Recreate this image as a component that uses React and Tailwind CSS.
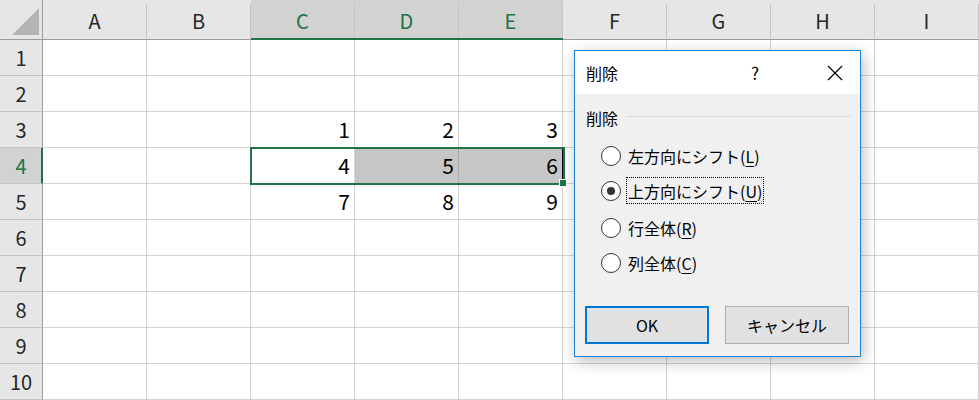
const cols = ['A', 'B', 'C', 'D', 'E', 'F', 'G', 'H', 'I'];
const values = {
  3: { C: '1', D: '2', E: '3' },
  4: { C: '4', D: '5', E: '6' },
  5: { C: '7', D: '8', E: '9' },
};
const selCols = ['C', 'D', 'E'];

function ColHeader({ label }) {
  const sel = selCols.includes(label);
  return (
    <div className={`h-[40px] ${sel ? 'bg-[#d2d2d2] border-b-2 border-[#217346] text-[#217346]' : 'bg-[#e6e6e6] border-b border-[#9b9b9b] text-[#262626]'}`}>
      <div className="mt-[4px] h-[34px] border-r border-[#c4c4c4] flex items-center justify-center text-[20px]">
        {label}
      </div>
    </div>
  );
}

function RowHeader({ n }) {
  const sel = n === 4;
  return (
    <div
      className={`h-[36px] border-b border-[#c4c4c4] flex items-center justify-center text-[20px] ${sel ? 'bg-[#d2d2d2] border-r-2 border-r-[#217346] text-[#217346] pl-[1px]' : 'bg-[#e6e6e6] border-r border-r-[#9b9b9b] text-[#262626]'}`}
    >
      {n}
    </div>
  );
}

function Cell({ row, col }) {
  const v = values[row]?.[col];
  const shaded = row === 4 && (col === 'D' || col === 'E');
  return (
    <div
      className={`h-[36px] border-b border-r flex items-center justify-end pr-[4px] pt-[1px] text-[21px] text-black ${shaded ? 'bg-[#c6c6c6] border-b-[#d4d4d4]' : 'bg-white border-[#d4d4d4]'} ${row === 4 && col === 'D' ? 'border-r-[#8f8f8f] border-dotted' : ''}`}
    >
      {v}
    </div>
  );
}

function Radio({ checked, label, mnemonic, focused }) {
  return (
    <div className="flex items-center h-[35px]">
      <div className="ml-[26px] w-[20px] h-[20px] rounded-full border border-[#333] bg-white flex items-center justify-center">
        {checked && <div className="w-[8px] h-[8px] rounded-full bg-[#333]" />}
      </div>
      <div className={`ml-[6px] px-[1px] h-[25px] flex items-center ${focused ? 'outline outline-1 outline-dotted outline-black' : ''}`}>
        {label}(<span className="underline underline-offset-[3px]">{mnemonic}</span>)
      </div>
    </div>
  );
}

function Dialog() {
  return (
    <div className="absolute left-[574px] top-[50px] w-[287px] h-[307px] border border-[#1883d7] bg-[#f0f0f0] shadow-[2px_4px_14px_rgba(0,0,0,0.28)] flex flex-col text-[16px] text-black">
      <div className="h-[43px] bg-white flex items-center pl-[11px] pr-[17px]">
        <span className="flex-1">削除</span>
        <span className="w-[20px] text-center mr-[62px] text-[17px]">?</span>
        <svg width="16" height="16" viewBox="0 0 16 16">
          <path d="M1 1L15 15M15 1L1 15" stroke="#000" strokeWidth="1.2" />
        </svg>
      </div>
      <div className="flex items-center pl-[11px] pr-[9px] mt-[12px] h-[24px]">
        <span>削除</span>
        <div className="flex-1 ml-[8px] h-px bg-[#d9d9d9] -mt-[4px]" />
      </div>
      <div className="mt-[8px] flex flex-col">
        <Radio label="左方向にシフト" mnemonic="L" />
        <Radio label="上方向にシフト" mnemonic="U" checked focused />
        <div className="h-[2px]" />
        <Radio label="行全体" mnemonic="R" />
        <Radio label="列全体" mnemonic="C" />
      </div>
      <div className="mt-[26px] flex gap-[16px] px-[10px]">
        <button className="w-[124px] h-[38px] bg-[#e1e1e1] border-2 border-[#0078d7] text-[16px]">OK</button>
        <button className="w-[124px] h-[38px] bg-[#e1e1e1] border border-[#adadad] text-[16px]">キャンセル</button>
      </div>
    </div>
  );
}

export default function App() {
  return (
    <div
      className="relative w-[979px] h-[400px] overflow-hidden bg-white"
      style={{ fontFamily: '"Noto Sans CJK JP", "Noto Sans", sans-serif' }}
    >
      <div className="grid grid-cols-[43px_repeat(9,104px)]">
        <div className="h-[40px] bg-[#e6e6e6] border-b border-r border-[#9b9b9b] relative">
          <svg className="absolute left-0 top-0" width="42" height="39" viewBox="0 0 42 39">
            <polygon points="12,35 39,35 39,8" fill="#b4b4b4" />
          </svg>
        </div>
        {cols.map((c) => (
          <ColHeader key={c} label={c} />
        ))}
        {Array.from({ length: 10 }, (_, i) => i + 1).map((r) => (
          <div key={r} className="contents">
            <RowHeader n={r} />
            {cols.map((c) => (
              <Cell key={c} row={r} col={c} />
            ))}
          </div>
        ))}
      </div>

      {/* selection outline */}
      <div className="absolute left-[250px] top-[147px] w-[315px] h-[38px] border-2 border-[#217346] pointer-events-none" />
      <div className="absolute left-[559px] top-[179px] w-[8px] h-[8px] bg-[#217346] border border-white" />

      <Dialog />
    </div>
  );
}
